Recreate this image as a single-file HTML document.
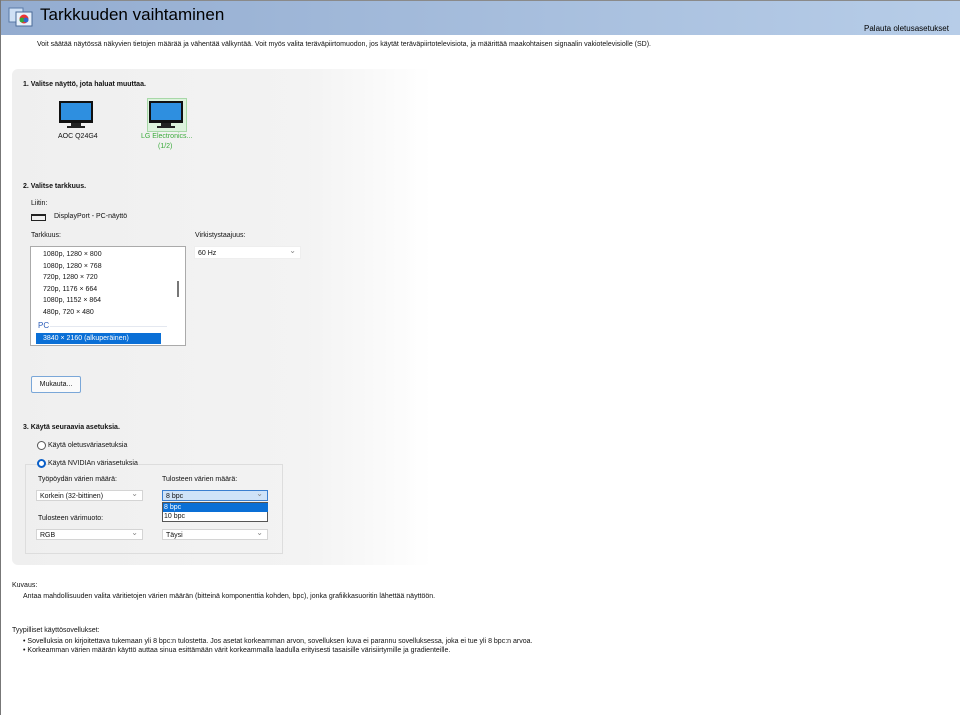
<!DOCTYPE html>
<html><head><meta charset="utf-8"><style>
body{margin:0;width:960px;height:715px;position:relative;background:#fff;font-family:"Liberation Sans",sans-serif;font-size:7px;color:#111;overflow:hidden}
.a{position:absolute;white-space:nowrap}
.b{font-weight:bold}
.sel{position:absolute;height:11px;border:1px solid #d4d4d4;background:#fff;font-size:7px;line-height:11px;padding-left:3px;box-sizing:border-box}
.sel:after{content:"⌄";position:absolute;right:4px;top:-3px;color:#888;font-size:8px}
</style></head><body>
<div class="a" style="left:0;top:0;width:960px;height:35px;background:linear-gradient(90deg,#93acd0,#b7cde8);border-top:1px solid #8a8a8a;box-sizing:border-box"></div>
<div class="a" style="left:0;top:0;width:1px;height:715px;background:#777"></div>
<svg class="a" style="left:8px;top:6px" width="26" height="22"><rect x="1" y="2" width="14" height="14" fill="#cfe0f5" stroke="#5a7aa8"/><rect x="8" y="6" width="16" height="14" fill="#e8f1fb" stroke="#4a6a98"/><circle cx="16" cy="13" r="4.5" fill="#e33"/><circle cx="14" cy="14" r="2.5" fill="#3a3"/><circle cx="18" cy="14" r="2.5" fill="#36c"/></svg>
<div class="a" style="left:40px;top:5px;font-size:17px;color:#000">Tarkkuuden vaihtaminen</div>
<div class="a" style="left:864px;top:24px;font-size:8px;color:#000">Palauta oletusasetukset</div>
<div class="a" style="left:37px;top:41px">Voit säätää näytössä näkyvien tietojen määrää ja vähentää välkyntää. Voit myös valita teräväpiirtomuodon, jos käytät teräväpiirtotelevisiota, ja määrittää maakohtaisen signaalin vakiotelevisiolle (SD).</div>
<div class="a" style="left:12px;top:69px;width:420px;height:496px;border-radius:6px;background:linear-gradient(90deg,#efefef 0%,#f3f3f3 70%,#fff 100%)"></div>
<div class="a b" style="left:23px;top:81px">1. Valitse näyttö, jota haluat muuttaa.</div>
<svg class="a" style="left:59px;top:101px" width="36" height="28"><rect x="0" y="0" width="34" height="22" fill="#111"/><rect x="2" y="2" width="30" height="17" fill="#2e8fe0"/><rect x="12" y="22" width="10" height="3" fill="#222"/><rect x="8" y="25" width="18" height="2" fill="#222"/></svg>
<div class="a" style="left:58px;top:133px">AOC Q24G4</div>
<div class="a" style="left:147px;top:98px;width:38px;height:32px;border:1px solid #a8d8a8;background:#dcf2dc"></div>
<svg class="a" style="left:149px;top:101px" width="36" height="28"><rect x="0" y="0" width="34" height="22" fill="#111"/><rect x="2" y="2" width="30" height="17" fill="#2e8fe0"/><rect x="12" y="22" width="10" height="3" fill="#222"/><rect x="8" y="25" width="18" height="2" fill="#222"/></svg>
<div class="a" style="left:141px;top:133px;color:#3aaa3a">LG Electronics...</div>
<div class="a" style="left:158px;top:143px;color:#3aaa3a">(1/2)</div>
<div class="a b" style="left:23px;top:183px">2. Valitse tarkkuus.</div>
<div class="a" style="left:31px;top:200px">Liitin:</div>
<div class="a" style="left:31px;top:214px;width:13px;height:4px;border:1px solid #222;border-top-width:2px"></div>
<div class="a" style="left:54px;top:213px">DisplayPort - PC-näyttö</div>
<div class="a" style="left:31px;top:232px">Tarkkuus:</div>
<div class="a" style="left:195px;top:232px">Virkistystaajuus:</div>
<div class="a" style="left:30px;top:246px;width:154px;height:98px;border:1px solid #aaa;background:#fff"></div>
<div class="a" style="left:43px;top:249px;line-height:11.6px">1080p, 1280 × 800<br>1080p, 1280 × 768<br>720p, 1280 × 720<br>720p, 1176 × 664<br>1080p, 1152 × 864<br>480p, 720 × 480</div>
<div class="a" style="left:177px;top:281px;width:2px;height:16px;background:#777"></div>
<div class="a" style="left:38px;top:321px;font-size:8px;color:#2a5cb8">PC</div>
<div class="a" style="left:50px;top:326px;width:117px;height:1px;background:#e4e8f0"></div>
<div class="a" style="left:36px;top:333px;width:125px;height:11px;background:#0a6fd6;color:#fff;line-height:11px;padding-left:7px;box-sizing:border-box">3840 × 2160 (alkuperäinen)</div>
<div class="sel" style="left:194px;top:246px;width:107px;height:13px;line-height:13px;border-color:#eee">60 Hz</div>
<div class="a" style="left:31px;top:376px;width:48px;height:15px;border:1px solid #7aa7d8;border-radius:2px;background:#fafafa;line-height:15px;text-align:center">Mukauta...</div>
<div class="a b" style="left:23px;top:424px">3. Käytä seuraavia asetuksia.</div>
<div class="a" style="left:37px;top:441px;width:7px;height:7px;border:1px solid #555;border-radius:50%;background:#fff"></div>
<div class="a" style="left:48px;top:442px">Käytä oletusväriasetuksia</div>
<div class="a" style="left:25px;top:464px;width:256px;height:88px;border:1px solid #ddd"></div>
<div class="a" style="left:37px;top:459px;width:5px;height:5px;border:2.5px solid #0a5fc8;border-radius:50%;background:#fff"></div>
<div class="a" style="left:48px;top:460px;background:#f2f2f2">Käytä NVIDIAn väriasetuksia</div>
<div class="a" style="left:38px;top:476px">Työpöydän värien määrä:</div>
<div class="a" style="left:162px;top:476px">Tulosteen värien määrä:</div>
<div class="sel" style="left:36px;top:490px;width:107px">Korkein (32-bittinen)</div>
<div class="sel" style="left:162px;top:490px;width:106px;background:#cfe3f8;border-color:#3a7fd0">8 bpc</div>
<div class="a" style="left:38px;top:515px">Tulosteen värimuoto:</div>
<div class="sel" style="left:36px;top:529px;width:107px">RGB</div>
<div class="sel" style="left:162px;top:529px;width:106px">Täysi</div>
<div class="a" style="left:162px;top:502px;width:106px;height:20px;border:1px solid #555;background:#fff;box-sizing:border-box"></div>
<div class="a" style="left:163px;top:503px;width:104px;height:9px;background:#0a6fd6;color:#fff;line-height:9px;padding-left:1px">8 bpc</div>
<div class="a" style="left:164px;top:512px;line-height:9px">10 bpc</div>
<div class="a" style="left:12px;top:582px">Kuvaus:</div>
<div class="a" style="left:23px;top:593px">Antaa mahdollisuuden valita väritietojen värien määrän (bitteinä komponenttia kohden, bpc), jonka grafiikkasuoritin lähettää näyttöön.</div>
<div class="a" style="left:12px;top:627px">Tyypilliset käyttösovellukset:</div>
<div class="a" style="left:23px;top:638px">• Sovelluksia on kirjoitettava tukemaan yli 8 bpc:n tulostetta. Jos asetat korkeamman arvon, sovelluksen kuva ei parannu sovelluksessa, joka ei tue yli 8 bpc:n arvoa.</div>
<div class="a" style="left:23px;top:647px">• Korkeamman värien määrän käyttö auttaa sinua esittämään värit korkeammalla laadulla erityisesti tasaisille värisiirtymille ja gradienteille.</div>
</body></html>
